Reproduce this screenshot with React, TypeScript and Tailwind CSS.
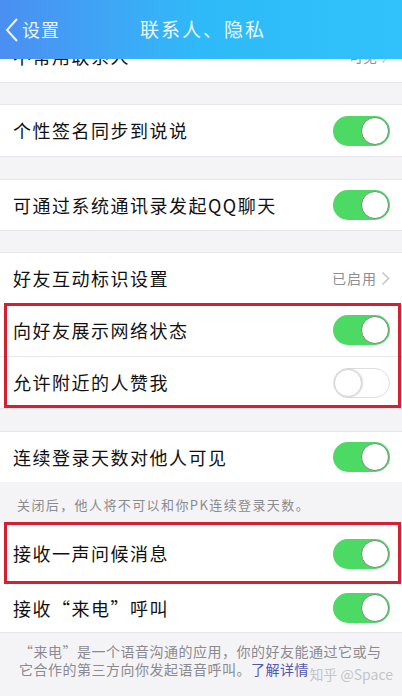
import React from 'react'

const FONT = { fontFamily: '"Noto Sans CJK SC", "Noto Sans", sans-serif' }

function Toggle({ on }: { on: boolean }) {
  return (
    <div
      className={
        on
          ? 'relative h-[30px] w-[57px] rounded-full bg-[#4cd964]'
          : 'relative h-[30px] w-[57px] rounded-full border border-[#dedede] bg-white'
      }
    >
      <div
        className={
          on
            ? 'absolute right-[1px] top-[1px] h-[28px] w-[28px] rounded-full border border-[#6f8f77] bg-white'
            : 'absolute left-0 top-0 h-[28px] w-[28px] rounded-full border border-[#d4d4d4] bg-white shadow-[1px_0_2px_rgba(0,0,0,0.15)]'
        }
      />
    </div>
  )
}

function Chevron() {
  return (
    <svg width="9" height="15" viewBox="0 0 9 15" className="ml-1">
      <path d="M1.5 1.5 L7.5 7.5 L1.5 13.5" fill="none" stroke="#c7c7cc" strokeWidth="1.6" />
    </svg>
  )
}

function Row({
  label,
  on,
  value,
  h = 'h-[51px]',
  divider = false,
}: {
  label: string
  on?: boolean
  value?: string
  h?: string
  divider?: boolean
}) {
  return (
    <div className={`flex items-center justify-between bg-white pl-[13px] pr-[12px] ${h} ${divider ? 'border-b border-[#e8e8ec]' : ''}`}>
      <span className="text-[18px] tracking-[1.5px] text-[#111]">{label}</span>
      {value !== undefined ? (
        <span className="flex items-center text-[14px] tracking-[1px] text-[#8e8e93]">
          {value}
          <Chevron />
        </span>
      ) : (
        <Toggle on={!!on} />
      )}
    </div>
  )
}

function Gap({ h = 'h-[23px]' }: { h?: string }) {
  return <div className={`${h} border-y border-[#e6e6ea] bg-[#f4f4f7]`} />
}

// moldura vermelha de anotação, desenhada por cima das linhas
function RedBox() {
  return <div className="pointer-events-none absolute -top-[1px] bottom-0 left-[4px] right-[1px] border-[3px] border-[#d42030]" />
}

export default function App() {
  return (
    <div className="relative h-[696px] w-[402px] overflow-hidden bg-[#f4f4f7]" style={FONT}>
      {/* barra de navegação */}
      <div className="relative z-10 flex h-[59px] items-center bg-gradient-to-r from-[#4a8ef2] via-[#2ebaf8] to-[#30c2fa] text-white">
        <div className="flex items-center pl-[5px]">
          <svg width="14" height="26" viewBox="0 0 14 26">
            <path d="M12 2 L2 13 L12 24" fill="none" stroke="#eaf6ff" strokeWidth="2" />
          </svg>
          <span className="ml-[3px] text-[18px] tracking-[1px] text-[#eaf6ff]">设置</span>
        </div>
        <span className="absolute left-[140px] text-[19px] tracking-[2px] text-[#eaf6ff]">联系人、隐私</span>
      </div>

      {/* linha cortada pelo cabeçalho */}
      <div className="h-[23px] overflow-hidden bg-white">
        <div className="-mt-[28px] flex h-[50px] items-center justify-between pl-[13px] pr-[12px]">
          <span className="text-[18px] tracking-[1.5px] text-[#111]">不常用联系人</span>
          <span className="flex items-center text-[14px] text-[#8e8e93]">
            可见
            <Chevron />
          </span>
        </div>
      </div>
      <Gap />
      <Row label="个性签名同步到说说" on h="h-[51px]" />
      <Gap h="h-[24px]" />
      <Row label="可通过系统通讯录发起QQ聊天" on h="h-[50px]" />
      <Gap />
      <Row label="好友互动标识设置" value="已启用" h="h-[51px]" />

      <div className="relative">
        <Row label="向好友展示网络状态" on h="h-[53px]" divider />
        <Row label="允许附近的人赞我" h="h-[51px]" />
        <RedBox />
      </div>

      <Gap h="h-[24px]" />
      <Row label="连续登录天数对他人可见" on h="h-[50px]" />
      <div className="h-[41px] bg-[#f4f4f7] pl-[17px] pt-[14px] text-[13px] leading-[18px] tracking-[1.4px] text-[#8a8a8f]">
        关闭后，他人将不可以和你PK连续登录天数。
      </div>

      <div className="relative">
        <Row label="接收一声问候消息" on h="h-[61px]" />
        <RedBox />
      </div>
      <Row label="接收“来电”呼叫" on h="h-[48px]" />
      <div className="border-t border-[#e6e6ea] pl-[19px] pt-[9px] text-[14px] leading-[18px] tracking-[0.5px] text-[#8a8a8f]">
        <div className="whitespace-nowrap">“来电”是一个语音沟通的应用，你的好友能通过它或与</div>
        <div className="whitespace-nowrap">
          它合作的第三方向你发起语音呼叫。
          <span className="text-[#5656b0]">了解详情</span>
        </div>
      </div>
      <span className="absolute bottom-[11px] right-[9px] text-[14px] text-[#c4c4c8]">知乎 @Space</span>
    </div>
  )
}
